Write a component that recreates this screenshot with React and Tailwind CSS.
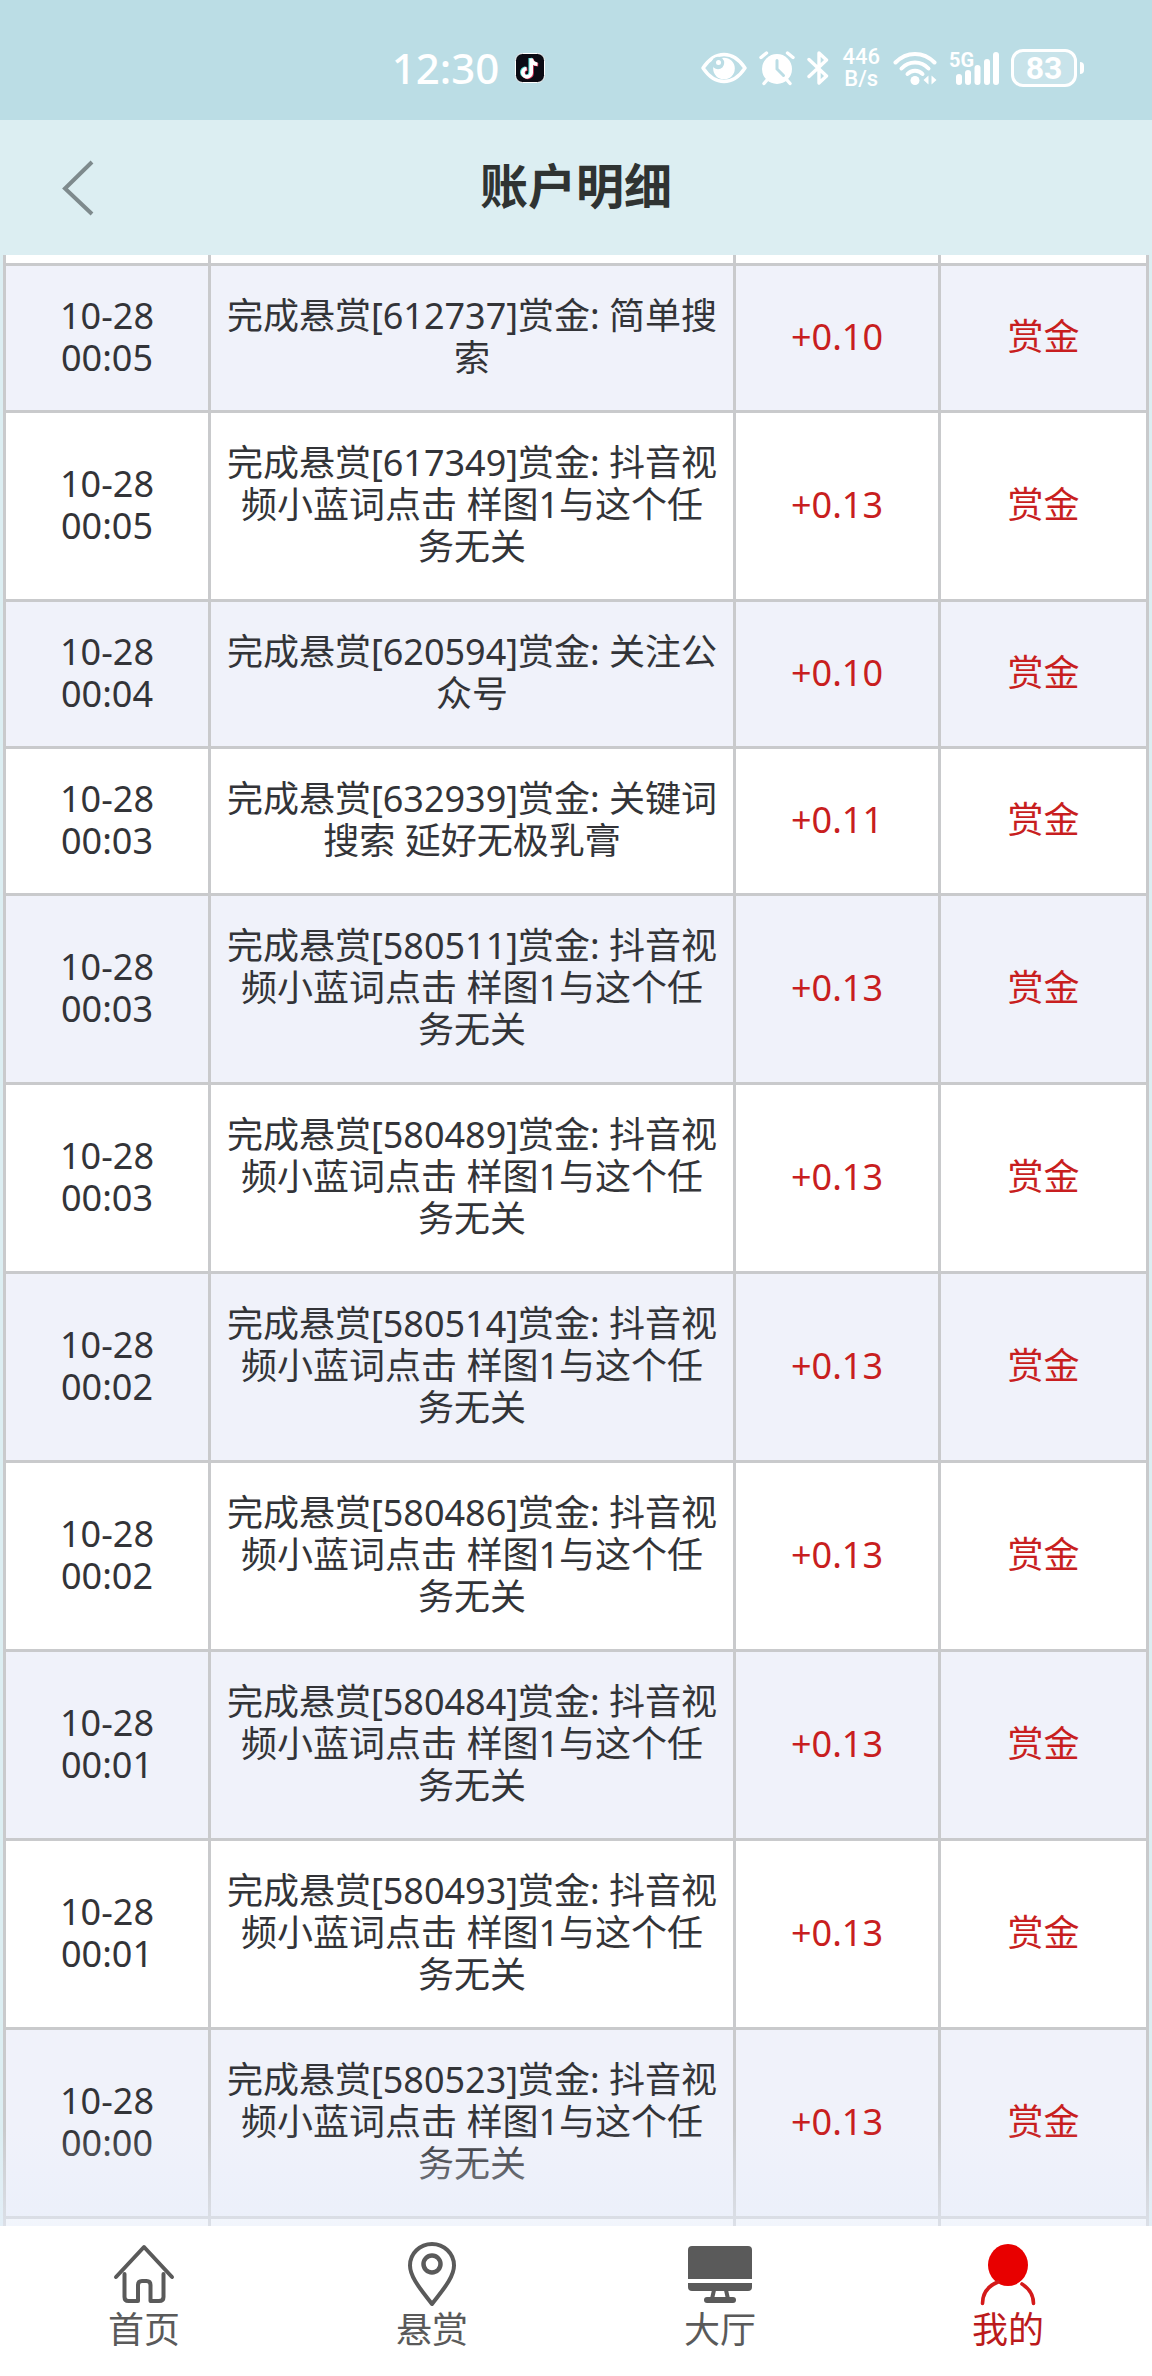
import clsx from 'clsx'

const TASK_LABEL = '抖音视频小蓝词点击 样图1与这个任务无关'

const records = [
  { time: '10-28 00:05', id: '612737', task: '简单搜索', amount: '+0.10' },
  { time: '10-28 00:05', id: '617349', task: TASK_LABEL, amount: '+0.13' },
  { time: '10-28 00:04', id: '620594', task: '关注公众号', amount: '+0.10' },
  { time: '10-28 00:03', id: '632939', task: '关键词搜索 延好无极乳膏', amount: '+0.11' },
  { time: '10-28 00:03', id: '580511', task: TASK_LABEL, amount: '+0.13' },
  { time: '10-28 00:03', id: '580489', task: TASK_LABEL, amount: '+0.13' },
  { time: '10-28 00:02', id: '580514', task: TASK_LABEL, amount: '+0.13' },
  { time: '10-28 00:02', id: '580486', task: TASK_LABEL, amount: '+0.13' },
  { time: '10-28 00:01', id: '580484', task: TASK_LABEL, amount: '+0.13' },
  { time: '10-28 00:01', id: '580493', task: TASK_LABEL, amount: '+0.13' },
  { time: '10-28 00:00', id: '580523', task: TASK_LABEL, amount: '+0.13' }
]

// Status bar icons
const TikTokIcon = () => (
  <svg width="30" height="30" viewBox="0 0 30 30" aria-hidden="true">
    <rect x="0.5" y="0.5" width="29" height="29" rx="7" fill="#0b0b14" stroke="#fff" />
    <g fill="none" strokeWidth="3.6">
      <path d="M15.2 5v14.2a4.2 4.2 0 1 1-4.6-4.2M15.2 5c.4 3.4 2.8 5.6 6.2 5.8" stroke="#4fd8d4" />
      <path d="M17 6v14.2a4.2 4.2 0 1 1-4.6-4.2M17 6c.4 3.4 2.8 5.6 6.2 5.8" stroke="#e2385a" />
      <path d="M16.2 5.5v14.2a4.2 4.2 0 1 1-4.6-4.2M16.2 5.5c.4 3.4 2.8 5.6 6.2 5.8" stroke="#fff" />
    </g>
  </svg>
)

const EyeIcon = () => (
  <svg width="46" height="34" viewBox="0 0 46 34" aria-hidden="true">
    <path d="M2 17C8 8 15 3.5 23 3.5S38 8 44 17C38 26 31 30.5 23 30.5S8 26 2 17z" fill="none" stroke="#fff" strokeWidth="3.4" strokeLinejoin="round" />
    <circle cx="23" cy="17.500" r="10.800" fill="#fff" />
    <circle cx="17" cy="12" r="6.200" fill="#bbdde5" />
    <circle cx="17.500" cy="11.500" r="2.500" fill="#fff" />
  </svg>
)

const AlarmIcon = () => (
  <svg width="36" height="36" viewBox="0 0 36 36" aria-hidden="true">
    <circle cx="18" cy="19" r="15" fill="#fff" />
    <g fill="none" strokeLinecap="round">
      <path d="M2 7.500 7.500 3M34 7.500 28.500 3" stroke="#fff" strokeWidth="3.400" />
      <path d="M8 30l-3 3.500M28 30l3 3.500" stroke="#fff" strokeWidth="3.400" />
      <path d="M18 10.500V19l6.500 6.500" stroke="#bbdde5" strokeWidth="3" />
    </g>
  </svg>
)

const BluetoothIcon = () => (
  <svg width="22" height="36" viewBox="0 0 22 36" aria-hidden="true">
    <path d="M2 9.500 19.500 26 12 33V3l7.500 7L2 26.500" fill="none" stroke="#fff" strokeWidth="3.400" strokeLinecap="round" strokeLinejoin="round" />
  </svg>
)

const WifiIcon = () => (
  <svg width="44" height="36" viewBox="0 0 44 36" aria-hidden="true">
    <g fill="none" stroke="#fff" strokeWidth="4" strokeLinecap="round">
      <path d="M2.500 12.500C13.500 1 30.500 1 41.500 12.500" />
      <path d="M8.500 18.500C16 10.500 28 10.500 35.500 18.500" />
      <path d="M14.500 24C18.500 19.500 25.500 19.500 29.500 24" />
    </g>
    <circle cx="22" cy="30.500" r="4.500" fill="#fff" />
    <path d="M35.500 25.500v9L30.500 30zM38.500 25.500v9L43.500 30z" fill="#fff" />
  </svg>
)

const SignalIcon = () => (
  <span className="relative block h-9">
    <span className="absolute left-0 top-0 text-xl leading-5 font-bold">5G</span>
    <svg width="50" height="36" viewBox="0 0 50 36" aria-hidden="true">
      <g fill="#fff">
        <rect x="7" y="24" width="6" height="11" rx="3" />
        <rect x="16" y="20" width="6" height="15" rx="3" />
        <rect x="25.500" y="15" width="6" height="20" rx="3" />
        <rect x="35" y="9" width="6" height="26" rx="3" />
        <rect x="44" y="2" width="6" height="33" rx="3" />
      </g>
    </svg>
  </span>
)

const StatusBar = () => (
  <div className="flex h-[120px] items-center justify-between bg-[#bbdde5] pr-[68px] pl-[34%] pt-4 text-white">
    <div className="flex items-center gap-4">
      <span className="text-[42px] leading-none font-medium">12:30</span>
      <TikTokIcon />
    </div>
    <div className="flex items-center gap-3 font-['Roboto','Noto_Sans_CJK_SC',sans-serif]">
      <EyeIcon />
      <AlarmIcon />
      <BluetoothIcon />
      <span className="px-px text-center text-[22px] leading-[22px] font-medium">
        446
        <br />
        B/s
      </span>
      <WifiIcon />
      <SignalIcon />
      <span className="flex items-center gap-[3px]">
        <span className="flex h-[38px] w-[66px] items-center justify-center rounded-xl border-3 border-white bg-white/20 text-[32px] leading-none font-bold">
          83
        </span>
        <span className="h-3 w-1 rounded-r bg-white" />
      </span>
    </div>
  </div>
)

const Header = () => (
  <header className="grid h-[135px] grid-cols-[160px_1fr_160px] items-center bg-[#dceef2]">
    <button type="button" aria-label="返回" className="flex h-full items-center pl-[60px]">
      <svg width="36" height="58" viewBox="0 0 36 58" aria-hidden="true">
        <path d="M32 3 5 29.500 32 55" fill="none" stroke="#7e8a8d" strokeWidth="4" />
      </svg>
    </button>
    <h1 className="pb-1 text-center text-[48px] leading-none font-bold text-[#2f3332]">账户明细</h1>
  </header>
)

const cell = 'border-3 border-[#c9cacc] px-[14px] pt-[29px] pb-[31px]'

// Row cut off by the scroll position, at both ends of the list
const CutRow = () => (
  <tr className="h-[9px] bg-white" aria-hidden="true">
    {[0, 1, 2, 3].map((i) => (
      <td key={i} className="border-x-3 border-[#c9cacc] p-0" />
    ))}
  </tr>
)

const RecordTable = () => (
  <main className="relative bg-[#dceef2] px-[3px]">
    <table aria-label="账户明细" className="w-full table-fixed border-collapse text-center text-4xl leading-[42px] text-[#333438]">
      <colgroup>
        <col className="w-[205px]" />
        <col />
        <col className="w-[205px]" />
        <col className="w-[208px]" />
      </colgroup>
      <tbody>
        <CutRow />
        {records.map((r, index) => (
          <tr key={r.id} className={index % 2 === 0 ? 'bg-[#f0f2fa]' : 'bg-white'}>
            <td className={cell}>{r.time}</td>
            <td className={cell}>{`完成悬赏[${r.id}]赏金: ${r.task}`}</td>
            <td className={clsx(cell, 'text-[#c81e20]')}>{r.amount}</td>
            <td className={clsx(cell, 'text-[#c81e20]')}>赏金</td>
          </tr>
        ))}
        <CutRow />
      </tbody>
    </table>
    <div className="pointer-events-none absolute inset-x-0 bottom-0 h-24 bg-linear-to-b from-[#e8eefa]/0 to-[#e8eefa]/60" />
  </main>
)

// Bottom tabs
const HomeIcon = () => (
  <svg width="64" height="64" viewBox="0 0 64 64" fill="none" stroke="currentColor" strokeWidth="4" strokeLinecap="round" strokeLinejoin="round" aria-hidden="true">
    <path d="M4 35 32 5l28 30" />
    <path d="M12.500 32v23q0 4 4 4H26V43q0-4 4-4h4.500q4 0 4 4v16H47q4.500 0 4.500-4V32" />
  </svg>
)

const PinIcon = () => (
  <svg width="64" height="64" viewBox="0 0 64 64" fill="none" stroke="currentColor" strokeWidth="4" strokeLinejoin="round" aria-hidden="true">
    <path d="M32 62C23 50 10 36 10 23.500a22 21.500 0 0 1 44 0C54 36 41 50 32 62z" />
    <circle cx="32" cy="22" r="8.500" strokeWidth="4.500" />
  </svg>
)

const MonitorIcon = () => (
  <svg width="64" height="64" viewBox="0 0 64 64" fill="currentColor" aria-hidden="true">
    <path d="M4 4h56q4 0 4 4v29H0V8q0-4 4-4z" />
    <path d="M0 41h64v4q0 4-4 4H4q-4 0-4-4z" />
    <path d="M26 48l-2 9M38 48l2 9" stroke="currentColor" strokeWidth="4" />
    <rect x="16" y="55" width="32" height="6" rx="3" />
  </svg>
)

const UserIcon = () => (
  <svg width="64" height="64" viewBox="0 0 64 64" aria-hidden="true">
    <ellipse cx="32" cy="23" rx="20" ry="21" fill="#e80000" />
    <path d="M22 40C12 44 6.500 51 6.500 61.500M46 42c7 4.500 11.500 11 11.500 19.500" fill="none" stroke="#d41a1a" strokeWidth="3.600" strokeLinecap="round" />
  </svg>
)

const tabs = [
  { label: '首页', Icon: HomeIcon },
  { label: '悬赏', Icon: PinIcon },
  { label: '大厅', Icon: MonitorIcon },
  { label: '我的', Icon: UserIcon, active: true }
]

const TabBar = () => (
  <nav className="flex h-[150px] bg-white pt-4">
    {tabs.map(({ label, Icon, active }) => (
      <a
        key={label}
        href="#"
        aria-current={active ? 'page' : undefined}
        className={clsx('flex flex-1 flex-col items-center text-4xl leading-[48px]', active ? 'text-[#bb1a1c]' : 'text-[#5a5a5a]')}
      >
        <Icon />
        {label}
      </a>
    ))}
  </nav>
)

const App = () => (
  <div className="min-h-screen bg-white font-['Noto_Sans','Noto_Sans_CJK_SC',sans-serif]">
    <StatusBar />
    <Header />
    <RecordTable />
    <TabBar />
  </div>
)

export default App
